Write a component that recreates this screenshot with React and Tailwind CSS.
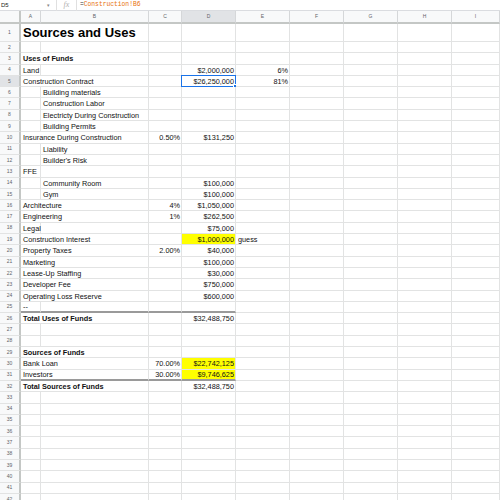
import React from "react";

const COLS = ["A", "B", "C", "D", "E", "F", "G", "H", "I"];
const WIDTHS = [20, 108, 33, 54, 54, 54, 54, 54, 48];

// cell: [col, span, text, opts]
const ROWS = {
  1: [[0, 2, "Sources and Uses", { title: true }]],
  3: [[0, 2, "Uses of Funds", { bold: true }]],
  4: [[0, 1, "Land"], [3, 1, "$2,000,000", { r: true }], [4, 1, "6%", { r: true }]],
  5: [[0, 2, "Construction Contract"], [3, 1, "$26,250,000", { r: true, sel: true }], [4, 1, "81%", { r: true }]],
  6: [[1, 1, "Building materials"]],
  7: [[1, 1, "Construction Labor"]],
  8: [[1, 1, "Electricty During Construction"]],
  9: [[1, 1, "Building Permits"]],
  10: [[0, 2, "Insurance During Construction"], [2, 1, "0.50%", { r: true }], [3, 1, "$131,250", { r: true }]],
  11: [[1, 1, "Liability"]],
  12: [[1, 1, "Builder's Risk"]],
  13: [[0, 1, "FFE"]],
  14: [[1, 1, "Community Room"], [3, 1, "$100,000", { r: true }]],
  15: [[1, 1, "Gym"], [3, 1, "$100,000", { r: true }]],
  16: [[0, 2, "Architecture"], [2, 1, "4%", { r: true }], [3, 1, "$1,050,000", { r: true }]],
  17: [[0, 2, "Engineering"], [2, 1, "1%", { r: true }], [3, 1, "$262,500", { r: true }]],
  18: [[0, 1, "Legal"], [3, 1, "$75,000", { r: true }]],
  19: [[0, 2, "Construction Interest"], [3, 1, "$1,000,000", { r: true, y: true }], [4, 1, "guess"]],
  20: [[0, 2, "Property Taxes"], [2, 1, "2.00%", { r: true }], [3, 1, "$40,000", { r: true }]],
  21: [[0, 2, "Marketing"], [3, 1, "$100,000", { r: true }]],
  22: [[0, 2, "Lease-Up Staffing"], [3, 1, "$30,000", { r: true }]],
  23: [[0, 2, "Developer Fee"], [3, 1, "$750,000", { r: true }]],
  24: [[0, 2, "Operating Loss Reserve"], [3, 1, "$600,000", { r: true }]],
  25: [[0, 1, "--"]],
  26: [[0, 2, "Total Uses of Funds", { bold: true }], [3, 1, "$32,488,750", { r: true }]],
  29: [[0, 2, "Sources of Funds", { bold: true }]],
  30: [[0, 2, "Bank Loan"], [2, 1, "70.00%", { r: true }], [3, 1, "$22,742,125", { r: true, y: true }]],
  31: [[0, 2, "Investors"], [2, 1, "30.00%", { r: true }], [3, 1, "$9,746,625", { r: true, y: true }]],
  32: [[0, 2, "Total Sources of Funds", { bold: true }], [3, 1, "$32,488,750", { r: true }]],
};

const THICK = { 25: true, 31: true };

function Row({ n }) {
  const defs = ROWS[n] || [];
  const cells = [];
  let c = 0;
  while (c < 9) {
    const d = defs.find((x) => x[0] === c);
    const span = d ? d[1] : 1;
    const opts = (d && d[3]) || {};
    let w = 0;
    for (let i = c; i < c + span; i++) w += WIDTHS[i];
    const thick = THICK[n] && c < 4;
    cells.push(
      <div
        key={c}
        className={
          "relative flex shrink-0 border-r border-r-[#e2e3e3] whitespace-nowrap overflow-visible " +
          (opts.title ? "items-center " : "items-end pb-[1px] ") +
          (thick ? "border-b-2 border-b-[#9a9a9a] " : "border-b border-b-[#e2e3e3] ") +
          (opts.r ? "justify-end pr-[1px] " : "justify-start pl-[2px] ") +
          (opts.y ? "bg-[#ffff00] " : "bg-white ")
        }
        style={{ width: w }}
      >
        {d && (
          <span
            className={
              opts.title
                ? "text-[13px] font-bold leading-none text-black"
                : "text-[7.3px] leading-none text-[#111] " + (opts.bold ? "font-bold" : "")
            }
          >
            {d[2]}
          </span>
        )}
        {opts.sel && (
          <>
            <div className="pointer-events-none absolute inset-[-1px] border border-[#1a73e8]" />
            <div className="absolute bottom-[-2px] right-[-2px] h-[4px] w-[4px] border border-white bg-[#1a73e8]" />
          </>
        )}
      </div>
    );
    c += span;
  }
  const sel = n === 5;
  return (
    <div className={"flex " + (n === 1 ? "h-[18px]" : "h-[11.3px]")}>
      <div
        className={
          "flex w-[21px] shrink-0 items-center justify-center border-r-2 border-r-[#c4c7c5] border-b border-b-[#e2e3e3] text-[5px] leading-none text-[#5f6368] " +
          (sel ? "bg-[#e1e3e6]" : "bg-[#f8f9fa]")
        }
      >
        {n}
      </div>
      {cells}
    </div>
  );
}

export default function App() {
  const rows = [];
  for (let i = 1; i <= 42; i++) rows.push(i);
  return (
    <div
      className="h-[500px] w-[500px] overflow-hidden bg-white"
      style={{ fontFamily: '"Liberation Sans", Arial, sans-serif' }}
    >
      {/* formula bar */}
      <div className="flex h-[11px] items-center border-b border-b-[#dadce0] bg-white">
        <div className="flex w-[56px] items-center justify-between pl-[1px] pr-[6px]">
          <span className="text-[6px] leading-none text-[#222]">D5</span>
          <span className="text-[5px] leading-none text-[#888]">▾</span>
        </div>
        <div className="h-[11px] w-px bg-[#e0e0e0]" />
        <div className="flex w-[19px] items-center justify-center">
          <span
            className="text-[8px] italic leading-none text-[#b0b0b0]"
            style={{ fontFamily: '"Liberation Serif", serif' }}
          >
            fx
          </span>
        </div>
        <div className="h-[11px] w-px bg-[#e0e0e0]" />
        <span
          className="pl-[3px] text-[6.3px] leading-none text-[#e8710a]"
          style={{ fontFamily: '"Liberation Mono", monospace' }}
        >
          <span className="text-[#333]">=</span>Construction!B6
        </span>
      </div>
      {/* column header */}
      <div className="flex h-[13px]">
        <div className="w-[21px] shrink-0 border-r-2 border-b-2 border-[#c4c7c5] bg-[#f8f9fa]" />
        {COLS.map((c, i) => (
          <div
            key={c}
            className={
              "flex shrink-0 items-center justify-center border-r border-r-[#d5d7d9] border-b-2 border-b-[#c4c7c5] text-[5px] leading-none text-[#5f6368] " +
              (c === "D" ? "bg-[#e1e3e6]" : "bg-[#f8f9fa]")
            }
            style={{ width: WIDTHS[i] }}
          >
            {c}
          </div>
        ))}
      </div>
      {rows.map((n) => (
        <Row key={n} n={n} />
      ))}
    </div>
  );
}
